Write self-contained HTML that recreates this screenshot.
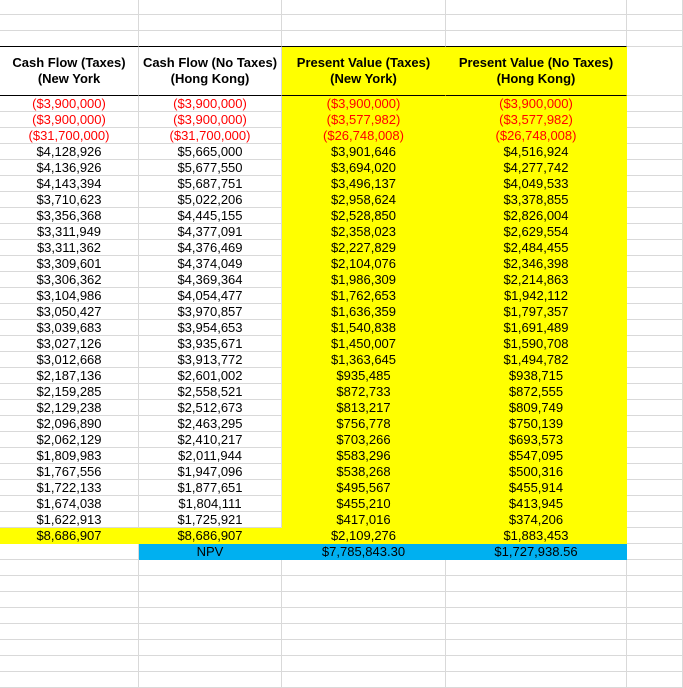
<!DOCTYPE html>
<html><head><meta charset="utf-8"><style>
body{margin:0;width:683px;height:673px;overflow:hidden;background:#fff;font-family:"Liberation Sans",Arial,sans-serif;}
.r{display:flex;height:16px;}
.c{box-sizing:border-box;height:16px;line-height:16px;border-right:1px solid #d9d9d9;border-bottom:1px solid #d9d9d9;text-align:center;font-size:13px;color:#000;white-space:nowrap;overflow:hidden;}
.a{width:139px}.b{width:143px}.k{width:164px}.d{width:181px}.e{width:56px}
.y{background:#ffff00;border-color:#ffff00}
.bl{background:#00b0f0;border-color:#00b0f0}
.red{color:#ff0000}
.h{height:49px}
.h .c{height:49px;font-weight:bold;font-size:13px;line-height:16px;padding-top:8px;border-bottom:1px solid #000}
.tb .c{border-bottom:1px solid #000}
</style></head><body>
<div class="r" style="height:15px"><div class="c a" style="height:15px"></div><div class="c b" style="height:15px"></div><div class="c k" style="height:15px"></div><div class="c d" style="height:15px"></div><div class="c e" style="height:15px"></div></div>
<div class="r"><div class="c a"></div><div class="c b"></div><div class="c k"></div><div class="c d"></div><div class="c e"></div></div>
<div class="r tb"><div class="c a"></div><div class="c b"></div><div class="c k"></div><div class="c d"></div><div class="c e" style="border-bottom-color:#d9d9d9"></div></div>
<div class="r h"><div class="c a">Cash Flow (Taxes)<br>(New York</div><div class="c b">Cash Flow (No Taxes)<br>(Hong Kong)</div><div class="c k y" style="border-bottom-color:#000">Present Value (Taxes)<br>(New York)</div><div class="c d y" style="border-bottom-color:#000">Present Value (No Taxes)<br>(Hong Kong)</div><div class="c e" style="border-bottom-color:#d9d9d9"></div></div>
<div class="r"><div class="c a red">($3,900,000)</div><div class="c b red">($3,900,000)</div><div class="c k y red">($3,900,000)</div><div class="c d y red">($3,900,000)</div><div class="c e"></div></div>
<div class="r"><div class="c a red">($3,900,000)</div><div class="c b red">($3,900,000)</div><div class="c k y red">($3,577,982)</div><div class="c d y red">($3,577,982)</div><div class="c e"></div></div>
<div class="r"><div class="c a red">($31,700,000)</div><div class="c b red">($31,700,000)</div><div class="c k y red">($26,748,008)</div><div class="c d y red">($26,748,008)</div><div class="c e"></div></div>
<div class="r"><div class="c a">$4,128,926</div><div class="c b">$5,665,000</div><div class="c k y">$3,901,646</div><div class="c d y">$4,516,924</div><div class="c e"></div></div>
<div class="r"><div class="c a">$4,136,926</div><div class="c b">$5,677,550</div><div class="c k y">$3,694,020</div><div class="c d y">$4,277,742</div><div class="c e"></div></div>
<div class="r"><div class="c a">$4,143,394</div><div class="c b">$5,687,751</div><div class="c k y">$3,496,137</div><div class="c d y">$4,049,533</div><div class="c e"></div></div>
<div class="r"><div class="c a">$3,710,623</div><div class="c b">$5,022,206</div><div class="c k y">$2,958,624</div><div class="c d y">$3,378,855</div><div class="c e"></div></div>
<div class="r"><div class="c a">$3,356,368</div><div class="c b">$4,445,155</div><div class="c k y">$2,528,850</div><div class="c d y">$2,826,004</div><div class="c e"></div></div>
<div class="r"><div class="c a">$3,311,949</div><div class="c b">$4,377,091</div><div class="c k y">$2,358,023</div><div class="c d y">$2,629,554</div><div class="c e"></div></div>
<div class="r"><div class="c a">$3,311,362</div><div class="c b">$4,376,469</div><div class="c k y">$2,227,829</div><div class="c d y">$2,484,455</div><div class="c e"></div></div>
<div class="r"><div class="c a">$3,309,601</div><div class="c b">$4,374,049</div><div class="c k y">$2,104,076</div><div class="c d y">$2,346,398</div><div class="c e"></div></div>
<div class="r"><div class="c a">$3,306,362</div><div class="c b">$4,369,364</div><div class="c k y">$1,986,309</div><div class="c d y">$2,214,863</div><div class="c e"></div></div>
<div class="r"><div class="c a">$3,104,986</div><div class="c b">$4,054,477</div><div class="c k y">$1,762,653</div><div class="c d y">$1,942,112</div><div class="c e"></div></div>
<div class="r"><div class="c a">$3,050,427</div><div class="c b">$3,970,857</div><div class="c k y">$1,636,359</div><div class="c d y">$1,797,357</div><div class="c e"></div></div>
<div class="r"><div class="c a">$3,039,683</div><div class="c b">$3,954,653</div><div class="c k y">$1,540,838</div><div class="c d y">$1,691,489</div><div class="c e"></div></div>
<div class="r"><div class="c a">$3,027,126</div><div class="c b">$3,935,671</div><div class="c k y">$1,450,007</div><div class="c d y">$1,590,708</div><div class="c e"></div></div>
<div class="r"><div class="c a">$3,012,668</div><div class="c b">$3,913,772</div><div class="c k y">$1,363,645</div><div class="c d y">$1,494,782</div><div class="c e"></div></div>
<div class="r"><div class="c a">$2,187,136</div><div class="c b">$2,601,002</div><div class="c k y">$935,485</div><div class="c d y">$938,715</div><div class="c e"></div></div>
<div class="r"><div class="c a">$2,159,285</div><div class="c b">$2,558,521</div><div class="c k y">$872,733</div><div class="c d y">$872,555</div><div class="c e"></div></div>
<div class="r"><div class="c a">$2,129,238</div><div class="c b">$2,512,673</div><div class="c k y">$813,217</div><div class="c d y">$809,749</div><div class="c e"></div></div>
<div class="r"><div class="c a">$2,096,890</div><div class="c b">$2,463,295</div><div class="c k y">$756,778</div><div class="c d y">$750,139</div><div class="c e"></div></div>
<div class="r"><div class="c a">$2,062,129</div><div class="c b">$2,410,217</div><div class="c k y">$703,266</div><div class="c d y">$693,573</div><div class="c e"></div></div>
<div class="r"><div class="c a">$1,809,983</div><div class="c b">$2,011,944</div><div class="c k y">$583,296</div><div class="c d y">$547,095</div><div class="c e"></div></div>
<div class="r"><div class="c a">$1,767,556</div><div class="c b">$1,947,096</div><div class="c k y">$538,268</div><div class="c d y">$500,316</div><div class="c e"></div></div>
<div class="r"><div class="c a">$1,722,133</div><div class="c b">$1,877,651</div><div class="c k y">$495,567</div><div class="c d y">$455,914</div><div class="c e"></div></div>
<div class="r"><div class="c a">$1,674,038</div><div class="c b">$1,804,111</div><div class="c k y">$455,210</div><div class="c d y">$413,945</div><div class="c e"></div></div>
<div class="r"><div class="c a">$1,622,913</div><div class="c b">$1,725,921</div><div class="c k y">$417,016</div><div class="c d y">$374,206</div><div class="c e"></div></div>
<div class="r"><div class="c a y">$8,686,907</div><div class="c b y">$8,686,907</div><div class="c k y">$2,109,276</div><div class="c d y">$1,883,453</div><div class="c e"></div></div>
<div class="r"><div class="c a"></div><div class="c b bl">NPV</div><div class="c k bl">$7,785,843.30</div><div class="c d bl">$1,727,938.56</div><div class="c e"></div></div>
<div class="r"><div class="c a"></div><div class="c b"></div><div class="c k"></div><div class="c d"></div><div class="c e"></div></div>
<div class="r"><div class="c a"></div><div class="c b"></div><div class="c k"></div><div class="c d"></div><div class="c e"></div></div>
<div class="r"><div class="c a"></div><div class="c b"></div><div class="c k"></div><div class="c d"></div><div class="c e"></div></div>
<div class="r"><div class="c a"></div><div class="c b"></div><div class="c k"></div><div class="c d"></div><div class="c e"></div></div>
<div class="r"><div class="c a"></div><div class="c b"></div><div class="c k"></div><div class="c d"></div><div class="c e"></div></div>
<div class="r"><div class="c a"></div><div class="c b"></div><div class="c k"></div><div class="c d"></div><div class="c e"></div></div>
<div class="r"><div class="c a"></div><div class="c b"></div><div class="c k"></div><div class="c d"></div><div class="c e"></div></div>
<div class="r"><div class="c a"></div><div class="c b"></div><div class="c k"></div><div class="c d"></div><div class="c e"></div></div>
</body></html>
